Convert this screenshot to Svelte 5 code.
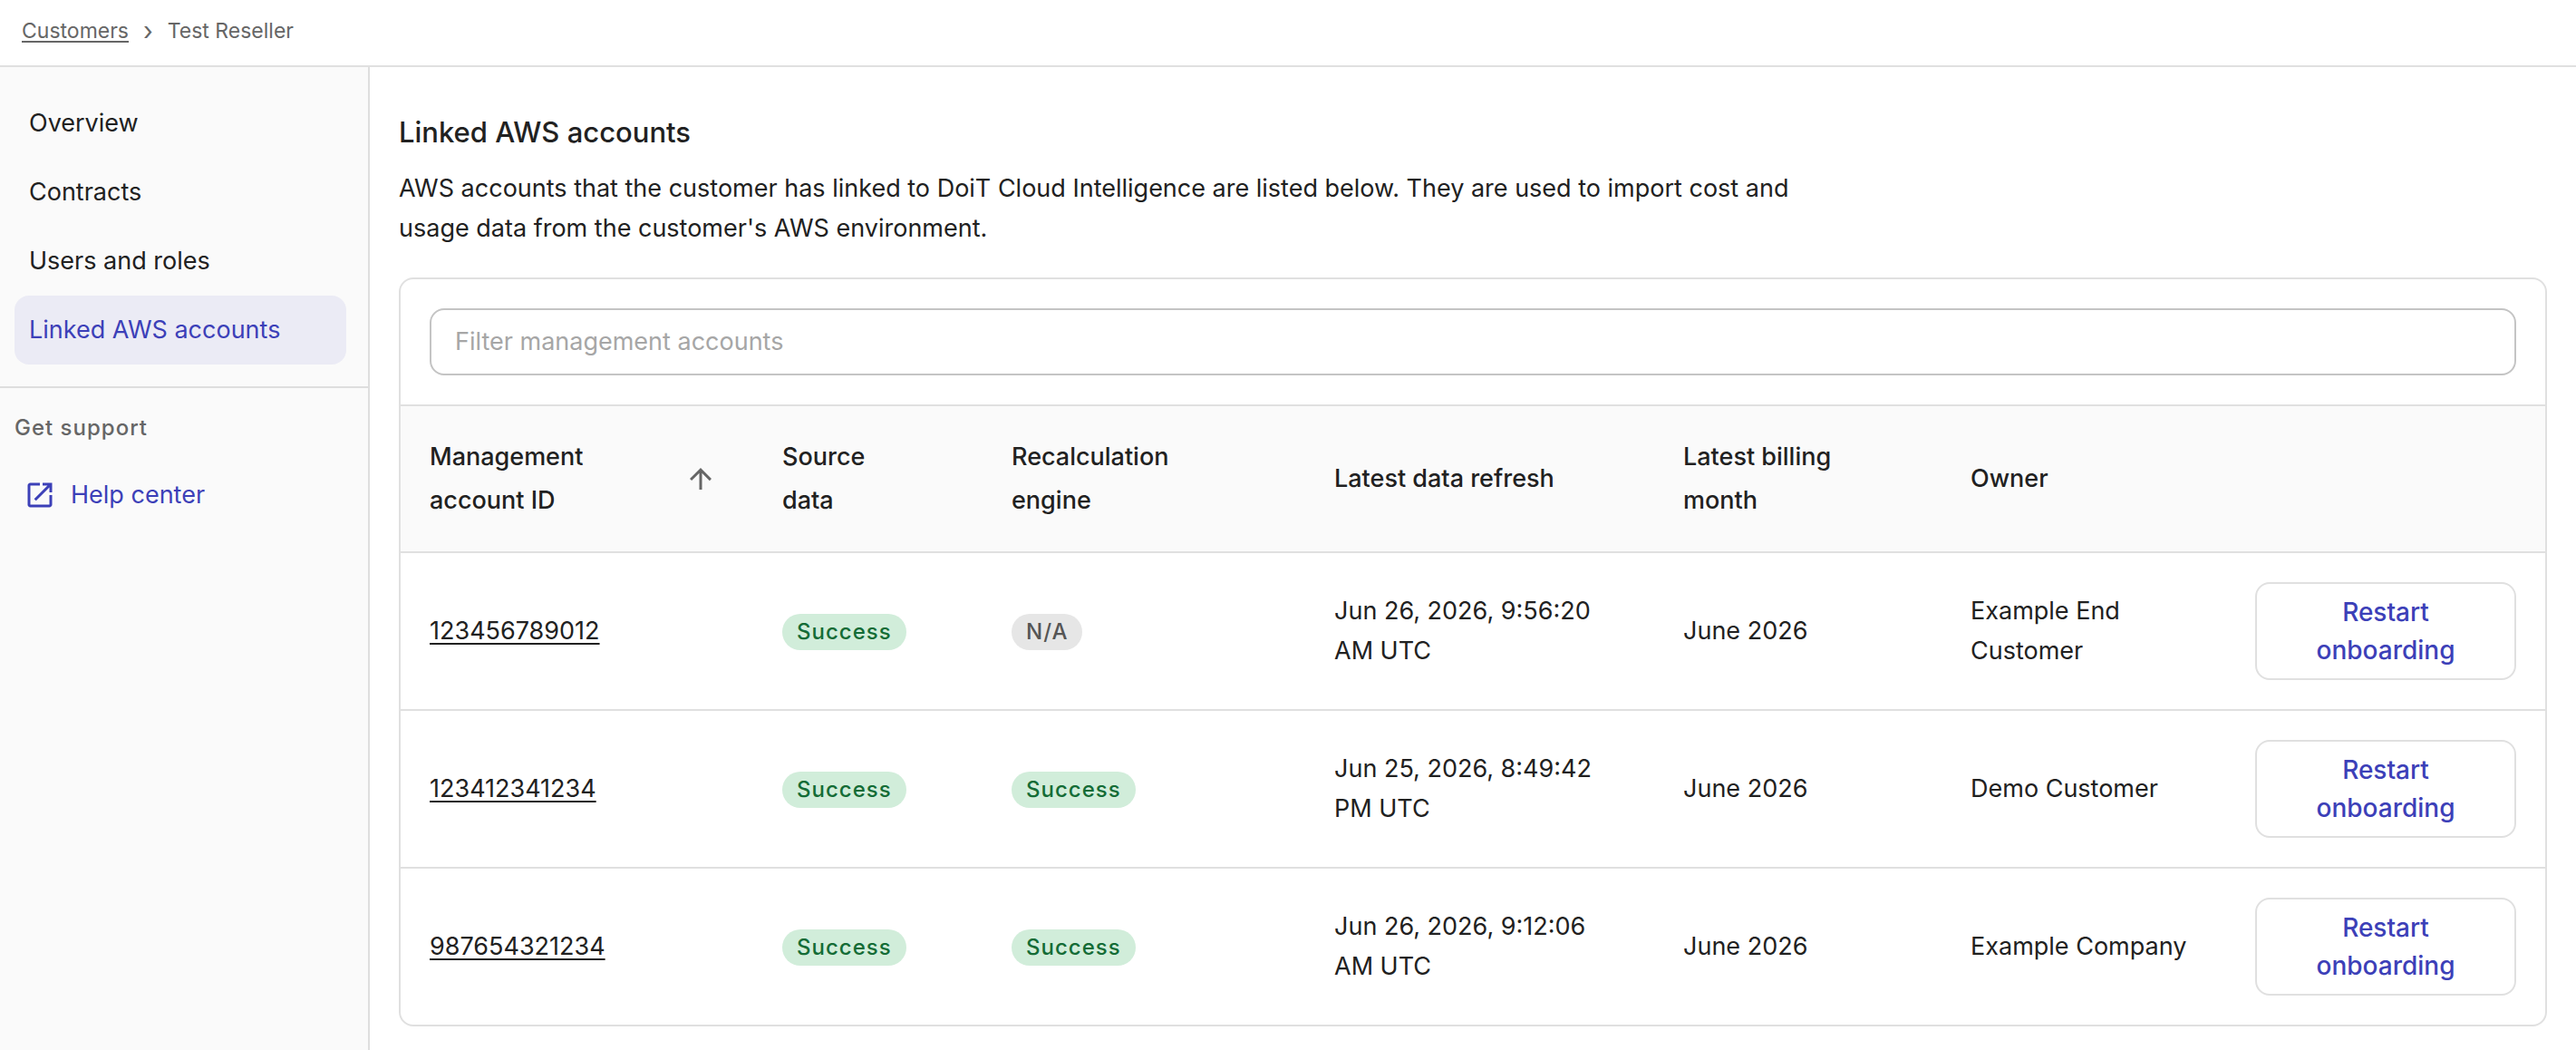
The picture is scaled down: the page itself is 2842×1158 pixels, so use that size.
<script lang="ts">
  type Status = 'Success' | 'N/A';
  type Account = {
    id: string;
    source: Status;
    engine: Status;
    refreshed: string;
    month: string;
    owner: string;
  };

  const navItems = ['Overview', 'Contracts', 'Users and roles', 'Linked AWS accounts'];
  let activeItem = $state('Linked AWS accounts');

  const accounts: Account[] = [
    { id: '123456789012', source: 'Success', engine: 'N/A', refreshed: 'Jun 26, 2026, 9:56:20 AM UTC', month: 'June 2026', owner: 'Example End Customer' },
    { id: '123412341234', source: 'Success', engine: 'Success', refreshed: 'Jun 25, 2026, 8:49:42 PM UTC', month: 'June 2026', owner: 'Demo Customer' },
    { id: '987654321234', source: 'Success', engine: 'Success', refreshed: 'Jun 26, 2026, 9:12:06 AM UTC', month: 'June 2026', owner: 'Example Company' }
  ];

  const columns = ['Management account ID', 'Source data', 'Recalculation engine', 'Latest data refresh', 'Latest billing month', 'Owner'];

  let sortColumn = $state('Management account ID');
  let filter = $state('');
  const visible = $derived(accounts.filter((a) => a.id.includes(filter.trim())));
</script>

<div class="page">
  <header>
    <nav class="breadcrumbs" aria-label="Breadcrumb">
      <a href="#customers">Customers</a>
      <span class="separator" aria-hidden="true">›</span>
      <span aria-current="page">Test Reseller</span>
    </nav>
  </header>

  <div class="body">
    <aside>
      <nav class="menu" aria-label="Customer">
        {#each navItems as item}
          <a href="#section" class="nav-item" class:active={item === activeItem} onclick={() => (activeItem = item)}>{item}</a>
        {/each}
      </nav>
      <section class="support">
        <h2>Get support</h2>
        <a href="#help" class="nav-item help">
          <svg viewBox="0 0 24 24" aria-hidden="true">
            <path d="M19 19H5V5h7V3H5c-1.110 0-2 .9-2 2v14c0 1.100.890 2 2 2h14c1.100 0 2-.9 2-2v-7h-2zM14 3v2h3.590l-9.830 9.830 1.410 1.410L19 6.410V10h2V3z" />
          </svg>
          Help center
        </a>
      </section>
    </aside>

    <main>
      <h1>Linked AWS accounts</h1>
      <p>
        AWS accounts that the customer has linked to DoiT Cloud Intelligence are listed below. They are used to import
        cost and usage data from the customer's AWS environment.
      </p>

      <div class="card">
        <div class="filter">
          <input type="text" placeholder="Filter management accounts" aria-label="Filter management accounts" bind:value={filter} />
        </div>
        <table>
          <colgroup>
            <col class="c-id" /><col class="c-source" /><col class="c-engine" /><col class="c-refresh" />
            <col class="c-month" /><col class="c-owner" /><col class="c-action" />
          </colgroup>
          <thead>
            <tr>
              {#each columns as column}
                <th scope="col" aria-sort={column === sortColumn ? 'ascending' : undefined}>
                  <button class="sort" class:sorted={column === sortColumn} onclick={() => (sortColumn = column)}>
                    {column}
                    <svg viewBox="0 0 24 24" aria-hidden="true">
                      <path d="M4 12l1.410 1.410L11 7.830V20h2V7.830l5.580 5.590L20 12l-8-8-8 8z" />
                    </svg>
                  </button>
                </th>
              {/each}
              <td></td>
            </tr>
          </thead>
          <tbody>
            {#each visible as account (account.id)}
              <tr>
                <td><a class="account" href="#account">{account.id}</a></td>
                <td><span class="badge" class:neutral={account.source === 'N/A'}>{account.source}</span></td>
                <td><span class="badge" class:neutral={account.engine === 'N/A'}>{account.engine}</span></td>
                <td>{account.refreshed}</td>
                <td>{account.month}</td>
                <td>{account.owner}</td>
                <td><button class="restart">Restart onboarding</button></td>
              </tr>
            {/each}
          </tbody>
        </table>
      </div>
    </main>
  </div>
</div>

<style>
  :global(body) {
    margin: 0;
    background: #fff;
  }
  .page {
    display: flex;
    flex-direction: column;
    min-height: 100vh;
    font-family: Inter, 'Liberation Sans', sans-serif;
    font-size: 27px;
    line-height: 44px;
    color: #212121;
  }
  .page,
  .page * {
    box-sizing: border-box;
  }
  header {
    padding: 16px 24px 20px;
    border-bottom: 2px solid #e0e0e0;
  }
  .breadcrumbs {
    display: flex;
    gap: 16px;
    font-size: 23px;
    line-height: 36px;
    color: #666;
  }
  .separator {
    font-size: 28px;
  }
  .breadcrumbs a {
    color: inherit;
    text-decoration-thickness: 2px;
    text-underline-offset: 3px;
  }
  .body {
    display: flex;
    flex: 1;
  }
  aside {
    flex: 0 0 408px;
    background: #fafafa;
    border-right: 2px solid #dedede;
  }
  .menu {
    padding: 24px 24px 24px 16px;
    border-bottom: 2px solid #dedede;
  }
  .nav-item {
    display: flex;
    align-items: center;
    padding: 16px;
    border-radius: 16px;
    color: inherit;
    text-decoration: none;
  }
  .nav-item.active {
    background: #ebebf5;
    color: #3c40b8;
  }
  .support {
    padding: 24px 24px 24px 16px;
  }
  .support h2 {
    margin: 0 0 16px;
    font-size: 24px;
    line-height: 40px;
    font-weight: 500;
    letter-spacing: 1px;
    color: #666;
  }
  .nav-item.help {
    gap: 16px;
    padding: 16px 10px;
    color: #3c40b8;
  }
  svg {
    flex: none;
    width: 36px;
    height: 36px;
    fill: currentColor;
  }
  main {
    flex: 1;
    min-width: 0;
    padding: 48px 32px 24px;
  }
  h1 {
    margin: 0 0 16px;
    font-size: 31px;
    line-height: 48px;
    font-weight: 500;
  }
  p {
    max-width: 1600px;
    margin: 0 0 32px;
  }
  .card {
    overflow: hidden;
    border: 2px solid #e0e0e0;
    border-radius: 16px;
  }
  .filter {
    padding: 32px;
    border-bottom: 2px solid #e0e0e0;
  }
  input {
    display: block;
    width: 100%;
    padding: 13px 26px;
    border: 2px solid #c4c4c4;
    border-radius: 16px;
    background: #fff;
    font: inherit;
    color: inherit;
  }
  input::placeholder {
    color: #a6a6a6;
    opacity: 1;
  }
  table {
    width: 100%;
    table-layout: fixed;
    border-collapse: separate;
    border-spacing: 0;
  }
  .c-id { width: 389px; }
  .c-source { width: 253px; }
  .c-engine { width: 356px; }
  .c-refresh { width: 385px; }
  .c-month { width: 317px; }
  .c-owner { width: 314px; }
  .c-action { width: 352px; }
  th,
  td {
    padding: 32px;
    border-bottom: 2px solid #e0e0e0;
    text-align: left;
    vertical-align: middle;
  }
  thead {
    background: #fafafa;
  }
  tbody tr:last-child td {
    border-bottom: 0;
  }
  button {
    margin: 0;
    font: inherit;
    color: inherit;
    background: none;
    cursor: pointer;
  }
  .sort {
    display: flex;
    align-items: center;
    padding: 0;
    border: 0;
    font-weight: 500;
    line-height: 48px;
    text-align: left;
  }
  .sort svg {
    margin: 0 8px;
    color: #666;
    opacity: 0;
  }
  .sort.sorted svg {
    opacity: 1;
  }
  .account {
    color: inherit;
    text-decoration-thickness: 2px;
    text-underline-offset: 4px;
  }
  .badge {
    display: inline-block;
    padding: 0 16px;
    border-radius: 20px;
    background: #d1edda;
    color: #146c36;
    font-size: 24px;
    line-height: 40px;
    font-weight: 500;
    letter-spacing: 1px;
  }
  .badge.neutral {
    background: #e6e6e6;
    color: #555;
  }
  .restart {
    display: block;
    width: 100%;
    padding: 10px 30px;
    border: 2px solid #e0e0e0;
    border-radius: 16px;
    color: #3c40b8;
    font-size: 28px;
    font-weight: 500;
    line-height: 42px;
  }
</style>
